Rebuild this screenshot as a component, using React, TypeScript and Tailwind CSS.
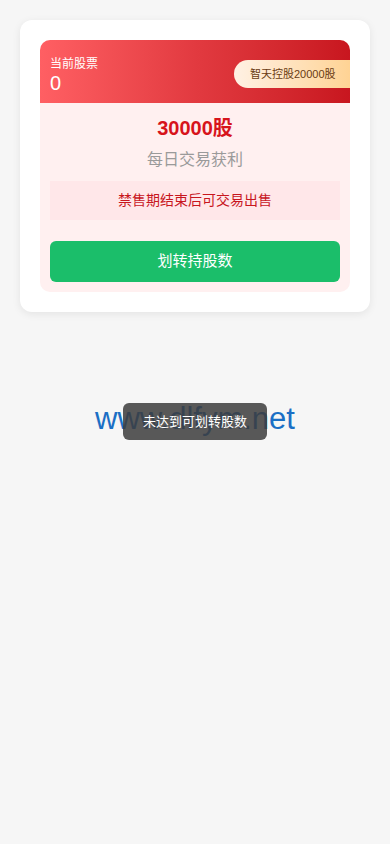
import React from 'react';

export default function App() {
  return (
    <div
      className="relative min-h-[844px] w-full bg-[#f6f6f6]"
      style={{ fontFamily: '"Liberation Sans", "Noto Sans CJK SC", sans-serif' }}
    >
      <div className="p-5">
        <div className="rounded-xl bg-white p-5 shadow-[0_2px_8px_rgba(0,0,0,0.08)]">
          <div className="overflow-hidden rounded-[10px] bg-[#fff0f0]">
            {/* header */}
            <div className="flex h-[63px] items-center justify-between bg-gradient-to-r from-[#ff5f63] via-[#e23a40] to-[#c8161f] pl-[10px]">
              <div className="pt-[7px] text-white">
                <div className="text-[12px] leading-[15px]">当前股票</div>
                <div className="text-[20px] leading-[22px]">0</div>
              </div>
              <div className="mt-[5px] flex h-[28px] w-[116px] items-center rounded-l-full bg-gradient-to-r from-[#fff1e4] to-[#ffd394] pl-[16px] text-[11px] text-[#6a3b12]">
                智天控股20000股
              </div>
            </div>

            <div className="px-[10px] pb-[10px] pt-[12px]">
              <div className="text-center text-[20px] font-bold leading-[26px] text-[#d7141b]">30000股</div>
              <div className="mt-[8px] text-center text-[16px] leading-[22px] text-[#9a9a9a]">每日交易获利</div>
              <div className="mt-[10px] flex h-[39px] items-center justify-center bg-[#ffe7e9] text-[14px] text-[#c8161e]">
                禁售期结束后可交易出售
              </div>
              <button className="mt-[21px] flex h-[41px] w-full items-center justify-center rounded-md bg-[#1bbe6a] text-[15px] text-white">
                划转持股数
              </button>
            </div>
          </div>
        </div>
      </div>

      {/* watermark */}
      <div className="absolute left-0 right-0 top-[400px] text-center text-[31px] leading-[38px] text-[#1b6fc5]">
        www.dlfym.net
      </div>

      {/* toast */}
      <div className="absolute left-[123px] top-[403px] flex h-[37px] w-[144px] items-center justify-center rounded-md bg-[rgba(60,60,60,0.85)] text-[13px] text-white">
        未达到可划转股数
      </div>
    </div>
  );
}
